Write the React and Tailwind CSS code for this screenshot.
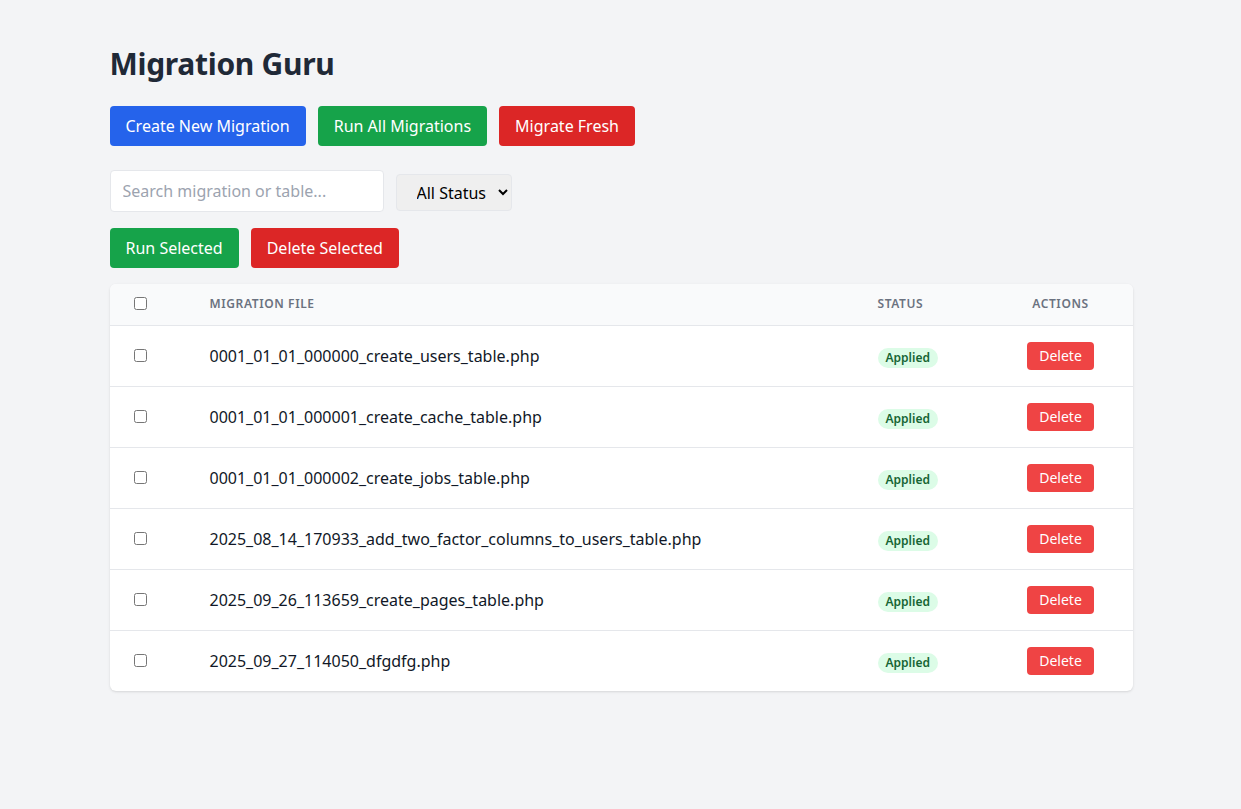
import { useState } from "react";

const migrations = [
  "0001_01_01_000000_create_users_table.php",
  "0001_01_01_000001_create_cache_table.php",
  "0001_01_01_000002_create_jobs_table.php",
  "2025_08_14_170933_add_two_factor_columns_to_users_table.php",
  "2025_09_26_113659_create_pages_table.php",
  "2025_09_27_114050_dfgdfg.php",
];

export default function App() {
  const [search, setSearch] = useState("");
  const [selected, setSelected] = useState([]);

  const toggle = (name) =>
    setSelected((s) => (s.includes(name) ? s.filter((n) => n !== name) : [...s, name]));

  return (
    <div
      className="min-h-screen bg-[#f3f4f6] pt-[46px]"
      style={{ fontFamily: '"Noto Sans", "Open Sans", sans-serif' }}
    >
      <div className="max-w-5xl mx-auto pl-[1px]">
        <h1 className="text-3xl font-bold text-[#1f2937] mb-6 tracking-[-0.3px]">Migration Guru</h1>

        {/* Main actions */}
        <div className="flex gap-3 mb-6">
          <button className="bg-[#2563eb] text-white px-4 py-2 rounded">Create New Migration</button>
          <button className="bg-[#16a34a] text-white px-4 py-2 rounded">Run All Migrations</button>
          <button className="bg-[#dc2626] text-white px-4 py-2 rounded">Migrate Fresh</button>
        </div>

        {/* Filters */}
        <div className="flex items-center gap-3 mb-4">
          <input
            type="text"
            value={search}
            onChange={(e) => setSearch(e.target.value)}
            placeholder="Search migration or table..."
            className="w-[274px] h-[42px] px-3 bg-white border border-[#e5e7eb] rounded placeholder-[#9ca3af]"
          />
          <select className="w-[116px] h-[37px] mt-[3px] pl-4 pr-1 bg-[#efefef] border border-[#e5e7eb] rounded text-black">
            <option>All Status</option>
            <option>Applied</option>
            <option>Pending</option>
          </select>
        </div>

        <div className="flex gap-3 mb-4">
          <button className="bg-[#16a34a] text-white px-4 py-2 rounded">Run Selected</button>
          <button className="bg-[#dc2626] text-white px-4 py-2 rounded">Delete Selected</button>
        </div>

        {/* Migrations table */}
        <div className="bg-white rounded-md shadow overflow-hidden">
          <table className="w-full table-fixed">
            <thead className="bg-[#f9fafb] border-b border-[#e5e7eb]">
              <tr className="h-[41px]">
                <th className="w-[76px] px-6 text-left">
                  <input type="checkbox" className="align-middle -mt-1" />
                </th>
                <th className="px-6 text-left text-xs font-semibold text-[#6b7280] uppercase tracking-wider">
                  Migration File
                </th>
                <th className="w-[135px] px-6 text-left text-xs font-semibold text-[#6b7280] uppercase tracking-wider">
                  Status
                </th>
                <th className="w-[144px] px-6 text-center text-xs font-semibold text-[#6b7280] uppercase tracking-wider">
                  Actions
                </th>
              </tr>
            </thead>
            <tbody className="divide-y divide-[#e5e7eb]">
              {migrations
                .filter((m) => m.toLowerCase().includes(search.toLowerCase()))
                .map((m) => (
                  <tr key={m} className="h-[61px]">
                    <td className="px-6">
                      <input
                        type="checkbox"
                        checked={selected.includes(m)}
                        onChange={() => toggle(m)}
                        className="align-middle -mt-1"
                      />
                    </td>
                    <td className="px-6 text-[#111827]">{m}</td>
                    <td className="px-6">
                      <span className="inline-block px-2 leading-5 text-xs font-semibold rounded-full bg-[#dcfce7] text-[#166534]">
                        Applied
                      </span>
                    </td>
                    <td className="px-6 text-center">
                      <button className="bg-[#ef4444] text-white text-sm px-3 py-1 rounded">Delete</button>
                    </td>
                  </tr>
                ))}
            </tbody>
          </table>
        </div>
      </div>
    </div>
  );
}
